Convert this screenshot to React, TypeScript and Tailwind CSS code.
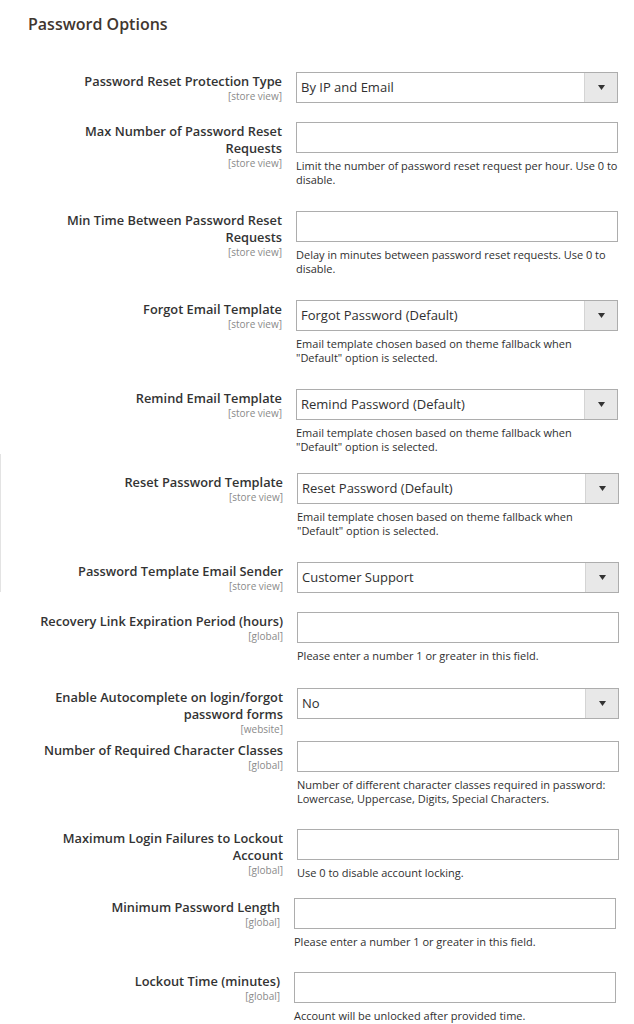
import React from "react";

type Field = {
  label: string[];
  scope: string;
  kind: "select" | "input";
  value?: string;
  note?: string[];
  h: string;
};

const SelectBox = ({ value }: { value: string }) => (
  <div className="flex h-[31px] w-[322px] border border-[#adadad] bg-white">
    <div className="flex flex-1 items-center pl-[4px] text-[13px] text-[#303030]">{value}</div>
    <div className="flex w-[33px] items-center justify-center border-l border-[#d4d4d4] bg-[#e8e8e8]">
      <svg width="7" height="5" viewBox="0 0 7 5">
        <path d="M0 0 L7 0 L3.5 5 Z" fill="#333" />
      </svg>
    </div>
  </div>
);

const Row = ({ f }: { f: Field }) => {
  return (
    <div className={"flex " + f.h}>
      <div className="w-[282px] shrink-0 pt-[1px] text-right">
        {f.label.map((l) => (
          <div key={l} className="whitespace-nowrap text-[12.8px] font-semibold leading-[17px] text-[#333333]">
            {l}
          </div>
        ))}
        <div className="text-[10px] leading-[12px] text-[#8a8a8a]">{f.scope}</div>
      </div>
      <div className="ml-[14px] w-[322px] shrink-0">
        {f.kind === "select" ? (
          <SelectBox value={f.value || ""} />
        ) : (
          <input
            type="text"
            className="block h-[31px] w-[322px] border border-[#adadad] bg-white px-[4px] text-[13px] outline-none"
          />
        )}
        {f.note && (
          <div className="mt-[6px]">
            {f.note.map((n) => (
              <div key={n} className="whitespace-nowrap text-[11px] leading-[14px] text-[#303030]">
                {n}
              </div>
            ))}
          </div>
        )}
      </div>
    </div>
  );
};

const tplNote = ["Email template chosen based on theme fallback when", "\"Default\" option is selected."];
const numNote = ["Please enter a number 1 or greater in this field."];

const groupA: Field[] = [
  { label: ["Password Reset Protection Type"], scope: "[store view]", kind: "select", value: "By IP and Email", h: "h-[50px]" },
  {
    label: ["Max Number of Password Reset", "Requests"],
    scope: "[store view]",
    kind: "input",
    note: ["Limit the number of password reset request per hour. Use 0 to", "disable."],
    h: "h-[89px]",
  },
  {
    label: ["Min Time Between Password Reset", "Requests"],
    scope: "[store view]",
    kind: "input",
    note: ["Delay in minutes between password reset requests. Use 0 to", "disable."],
    h: "h-[89px]",
  },
  { label: ["Forgot Email Template"], scope: "[store view]", kind: "select", value: "Forgot Password (Default)", note: tplNote, h: "h-[89px]" },
  { label: ["Remind Email Template"], scope: "[store view]", kind: "select", value: "Remind Password (Default)", note: tplNote, h: "h-[65px]" },
];

const groupB: Field[] = [
  { label: ["Reset Password Template"], scope: "[store view]", kind: "select", value: "Reset Password (Default)", note: tplNote, h: "h-[89px]" },
  { label: ["Password Template Email Sender"], scope: "[store view]", kind: "select", value: "Customer Support", h: "h-[30px]" },
];

const groupC: Field[] = [
  { label: ["Recovery Link Expiration Period (hours)"], scope: "[global]", kind: "input", note: numNote, h: "h-[76px]" },
  { label: ["Enable Autocomplete on login/forgot", "password forms"], scope: "[website]", kind: "select", value: "No", h: "h-[53px]" },
  {
    label: ["Number of Required Character Classes"],
    scope: "[global]",
    kind: "input",
    note: ["Number of different character classes required in password:", "Lowercase, Uppercase, Digits, Special Characters."],
    h: "h-[88px]",
  },
  { label: ["Maximum Login Failures to Lockout", "Account"], scope: "[global]", kind: "input", note: ["Use 0 to disable account locking."], h: "h-[69px]" },
];

const groupD: Field[] = [
  { label: ["Minimum Password Length"], scope: "[global]", kind: "input", note: numNote, h: "h-[74px]" },
  { label: ["Lockout Time (minutes)"], scope: "[global]", kind: "input", note: ["Account will be unlocked after provided time."], h: "h-[52px]" },
];

export default function App() {
  return (
    <div className="min-h-[1024px] w-[634px] overflow-hidden bg-white font-['Open_Sans',sans-serif]">
      <h2 className="pl-[28px] pt-[14px] text-[16px] font-semibold leading-[20px] text-[#41362f]">Password Options</h2>
      <div className="mt-[38px]">
        {groupA.map((f) => (
          <Row key={f.label.join(" ")} f={f} />
        ))}
        <div className="border-l border-[#e3e3e3] pt-[19px]">
          {groupB.map((f) => (
            <Row key={f.label.join(" ")} f={f} />
          ))}
        </div>
        <div className="mt-[20px] pl-[1px]">
          {groupC.map((f) => (
            <Row key={f.label.join(" ")} f={f} />
          ))}
        </div>
        <div className="-ml-[2px]">
          {groupD.map((f) => (
            <Row key={f.label.join(" ")} f={f} />
          ))}
        </div>
      </div>
    </div>
  );
}
